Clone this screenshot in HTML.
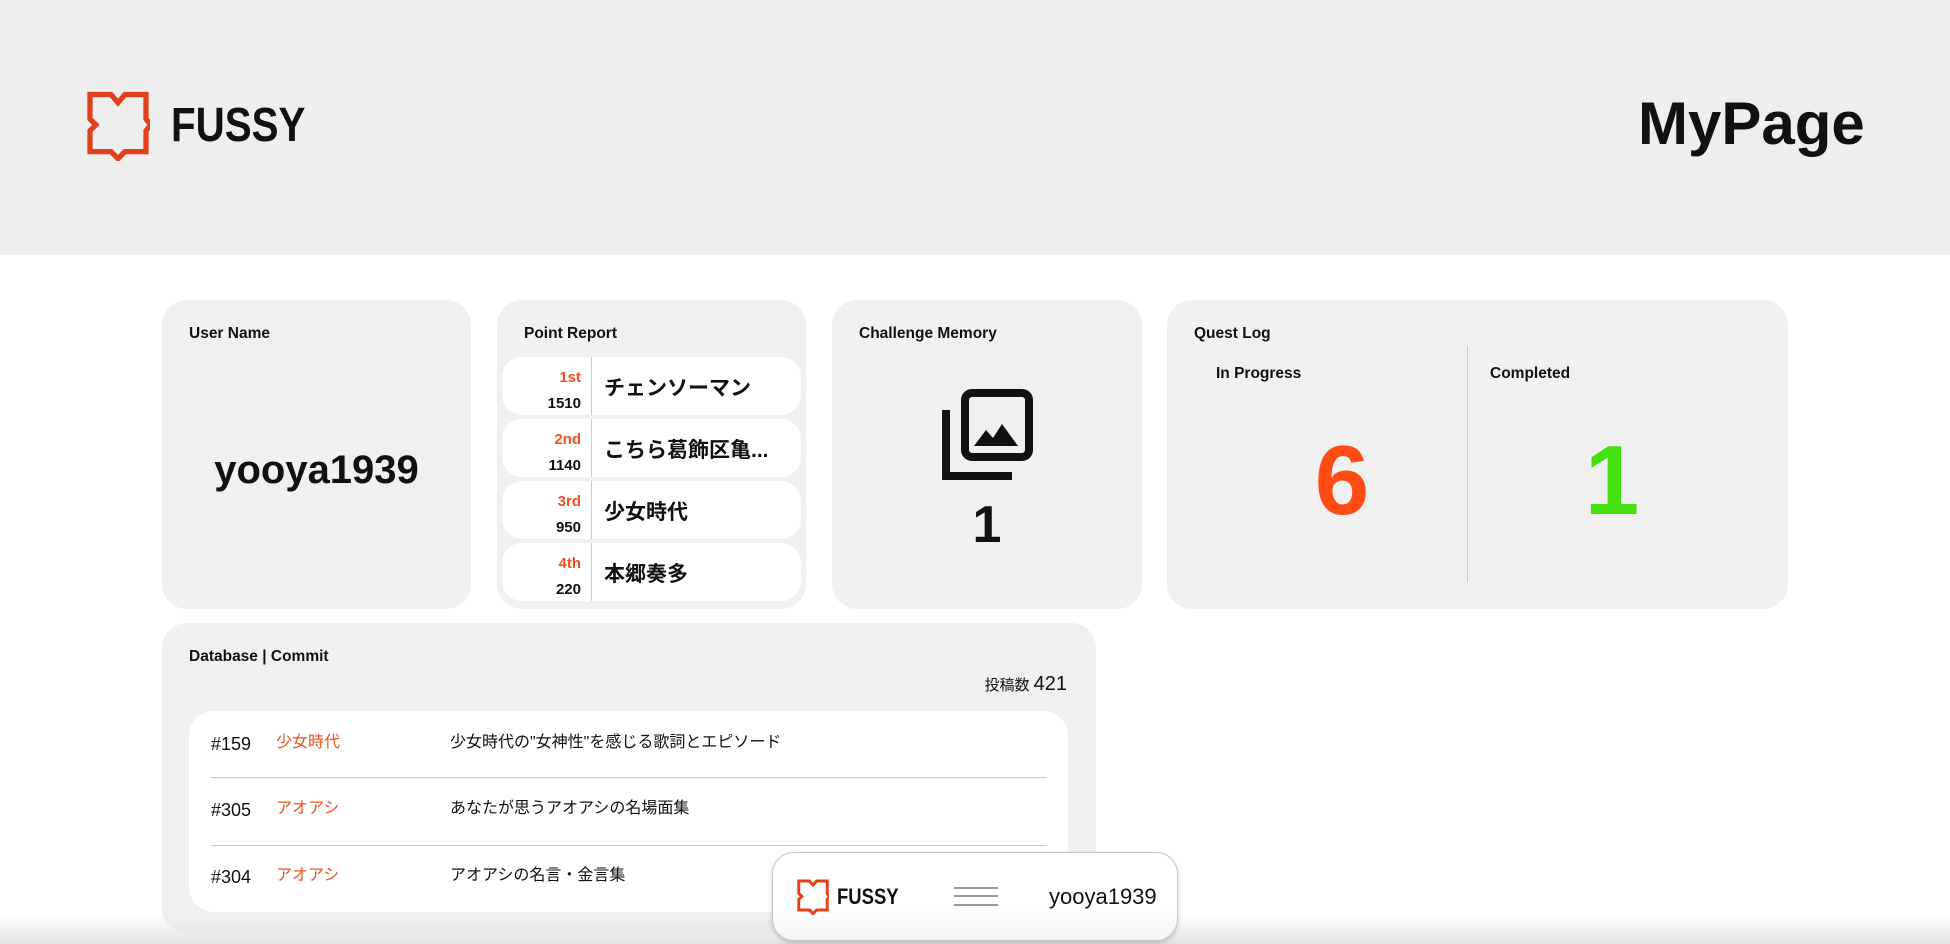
<!DOCTYPE html>
<html><head><meta charset="utf-8"><style>
*{margin:0;padding:0;box-sizing:border-box}
body{width:1950px;height:944px;overflow:hidden;background:#fff;font-family:"Liberation Sans","Noto Sans CJK JP",sans-serif;color:#111;position:relative}
.hdr{position:absolute;left:0;top:0;width:1950px;height:255px;background:#eeeeee}
.abs{position:absolute}
.card{position:absolute;background:#f0f0f0;border-radius:25px}
.t{position:absolute;font-weight:bold;font-size:15.5px}
.row{position:absolute;left:5px;width:299px;height:58px;background:#fff;border-radius:20px}
.row .rk{position:absolute;right:220px;top:12px;color:#f0501e;font-weight:bold;font-size:15px}
.row .pt{position:absolute;right:220px;top:38px;font-weight:bold;font-size:15px}
.row .dv{position:absolute;left:89px;top:0;width:1px;height:58px;background:#ccc}
.row .nm{position:absolute;left:102px;top:15px;font-weight:bold;font-size:21px}
.dr{position:absolute;left:22px;font-size:18px}
.dr .c{position:absolute;left:65px;color:#f0501e;font-size:16px;top:-6px;white-space:nowrap}
.dr .s{position:absolute;left:239px;font-size:16px;top:-6px;white-space:nowrap}
.logo{font-weight:bold;font-family:"Liberation Sans",sans-serif;transform:scaleX(0.84);transform-origin:left}
</style></head><body>
<div class="hdr"></div>
<svg class="abs" style="left:86px;top:91px" width="64" height="70" viewBox="0 0 54 60"><path d="M3,3 L21,3 L27,10 L33,3 L51,3 L51,24 L55,29 L51,34 L51,52 L33,52 L27,58 L21,52 L3,52 L3,34 L8,29 L3,24 Z" fill="none" stroke="#e0401a" stroke-width="4.5"/></svg>
<div class="abs logo" style="left:171px;top:98px;font-size:48px">FUSSY</div>
<div class="abs" style="left:1638px;top:89px;font-size:60px;font-weight:bold">MyPage</div>

<div class="card" style="left:162px;top:300px;width:309px;height:309px">
<div class="t" style="left:27px;top:25px">User Name</div>
<div class="abs" style="left:0;width:309px;text-align:center;top:148px;font-size:40px;font-weight:bold">yooya1939</div>
</div>

<div class="card" style="left:497px;top:300px;width:309px;height:309px">
<div class="t" style="left:27px;top:25px">Point Report</div>
<div class="row" style="top:57px"><div class="rk">1st</div><div class="pt">1510</div><div class="dv"></div><div class="nm">チェンソーマン</div></div>
<div class="row" style="top:119px"><div class="rk">2nd</div><div class="pt">1140</div><div class="dv"></div><div class="nm">こちら葛飾区亀...</div></div>
<div class="row" style="top:181px"><div class="rk">3rd</div><div class="pt">950</div><div class="dv"></div><div class="nm">少女時代</div></div>
<div class="row" style="top:243px"><div class="rk">4th</div><div class="pt">220</div><div class="dv"></div><div class="nm">本郷奏多</div></div>
</div>

<div class="card" style="left:832px;top:300px;width:310px;height:309px">
<div class="t" style="left:27px;top:25px">Challenge Memory</div>
<svg class="abs" style="left:110px;top:88px" width="92" height="92" viewBox="0 0 92 92"><rect x="23" y="5" width="64" height="64" rx="7" fill="none" stroke="#111" stroke-width="8"/><path d="M4,22 V88 H70" fill="none" stroke="#111" stroke-width="8"/><path d="M32,58 L44,42 L51,50 L60,36 L76,58 Z" fill="#111"/></svg>
<div class="abs" style="left:0;width:310px;text-align:center;top:195px;font-size:52px;font-weight:bold">1</div>
</div>

<div class="card" style="left:1167px;top:300px;width:621px;height:309px">
<div class="t" style="left:27px;top:25px">Quest Log</div>
<div class="t" style="left:49px;top:65px">In Progress</div>
<div class="t" style="left:323px;top:65px">Completed</div>
<div class="abs" style="left:300px;top:46px;width:1px;height:236px;background:#ccc"></div>
<div class="abs" style="left:60px;width:230px;text-align:center;top:124px;font-size:98px;font-weight:bold;color:#ff4c14">6</div>
<div class="abs" style="left:330px;width:230px;text-align:center;top:124px;font-size:98px;font-weight:bold;color:#44e010">1</div>
</div>

<div class="card" style="left:162px;top:623px;width:934px;height:310px">
<div class="t" style="left:27px;top:25px">Database | Commit</div>
<div class="abs" style="right:29px;top:50px;font-size:15px">投稿数 <span style="font-size:20px">421</span></div>
<div class="abs" style="left:27px;top:88px;width:879px;height:201px;background:#fff;border-radius:25px">
<div class="dr" style="top:23px">#159<span class="c">少女時代</span><span class="s">少女時代の"女神性"を感じる歌詞とエピソード</span></div>
<div class="abs" style="left:22px;top:66px;width:836px;height:1px;background:#c8c8c8"></div>
<div class="dr" style="top:89px">#305<span class="c">アオアシ</span><span class="s">あなたが思うアオアシの名場面集</span></div>
<div class="abs" style="left:22px;top:134px;width:836px;height:1px;background:#c8c8c8"></div>
<div class="dr" style="top:156px">#304<span class="c">アオアシ</span><span class="s">アオアシの名言・金言集</span></div>
</div>
</div>

<div class="abs" style="left:0;top:914px;width:1950px;height:30px;background:linear-gradient(#fff0,#e2e2e2)"></div>

<div class="abs" style="left:772px;top:852px;width:406px;height:89px;background:linear-gradient(#fff 60%,#f3f3f3);border:1px solid #c8c8c8;border-radius:22px;box-shadow:0 2px 5px rgba(0,0,0,.2)">
<svg class="abs" style="left:24px;top:26px" width="32" height="36" viewBox="0 0 54 60"><path d="M3,3 L21,3 L27,10 L33,3 L51,3 L51,24 L55,29 L51,34 L51,52 L33,52 L27,58 L21,52 L3,52 L3,34 L8,29 L3,24 Z" fill="none" stroke="#e0401a" stroke-width="5"/></svg>
<div class="abs logo" style="left:64px;top:31px;font-size:22px">FUSSY</div>
<div class="abs" style="left:181px;top:34px;width:44px;height:2px;background:#999"></div>
<div class="abs" style="left:181px;top:42px;width:44px;height:2px;background:#999"></div>
<div class="abs" style="left:181px;top:51px;width:44px;height:2px;background:#999"></div>
<div class="abs" style="left:276px;top:31px;font-size:22px">yooya1939</div>
</div>
</body></html>
